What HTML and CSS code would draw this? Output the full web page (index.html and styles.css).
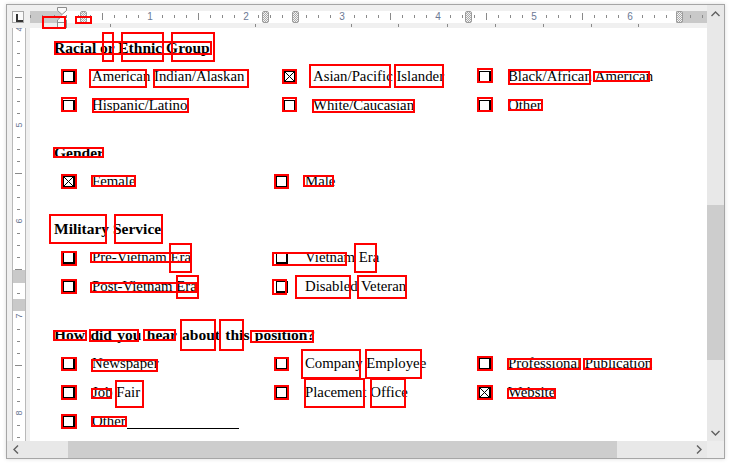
FILE: index.html
```html
<!DOCTYPE html>
<html>
<head>
<meta charset="utf-8">
<link rel="stylesheet" href="styles.css">
</head>
<body>
<div class="window">
  <div class="corner"><span class="tabsel"></span></div>
  <div class="hruler">
    <div class="band">
      <div class="nums"><span><b>1</b></span><span><b>2</b></span><span><b>3</b></span><span><b>4</b></span><span><b>5</b></span><span><b>6</b></span></div>
      <span class="mk" style="left:50px"></span>
      <span class="mk" style="left:232px"></span>
      <span class="mk" style="left:262px"></span>
      <span class="mk" style="left:435px"></span>
      <span class="mk" style="left:646px"></span>
    </div>
    <div class="tabs">
      <i style="left:80px"></i><i style="left:225px"></i><i style="left:321px"></i><i style="left:368px"></i><i style="left:417px"></i><i style="left:465px"></i><i style="left:513px"></i><i style="left:561px"></i><i style="left:608px"></i>
    </div>
    <svg class="indent" width="12" height="23" viewBox="0 0 12 23">
      <polygon points="1.5,1.5 10.5,1.5 10.5,4.5 6,8.5 1.5,4.5" fill="#fafafa" stroke="#8c8c8c"/>
      <polygon points="6,10 10.5,14 10.5,16.5 1.5,16.5 1.5,14" fill="#fafafa" stroke="#8c8c8c"/>
      <rect x="1.5" y="16.5" width="9" height="5" fill="#fafafa" stroke="#8c8c8c"/>
    </svg>
  </div>
  <div class="vscroll">
    <div class="btn"><svg width="9" height="6" viewBox="0 0 9 6"><polyline points="0.5,5 4.5,1 8.5,5" fill="none" stroke="#606060" stroke-width="1.4"/></svg></div>
    <div class="thumb"></div>
    <div class="btn end"><svg width="9" height="6" viewBox="0 0 9 6"><polyline points="0.5,1 4.5,5 8.5,1" fill="none" stroke="#606060" stroke-width="1.4"/></svg></div>
  </div>
  <div class="vruler">
    <div class="vband">
      <span class="vb" style="top:242px;height:13px"></span>
      <span class="vb" style="top:271px;height:12px"></span>
      <span class="vn" style="top:-4px">4</span>
      <span class="vn" style="top:92px">5</span>
      <span class="vn" style="top:188px">6</span>
      <span class="vn" style="top:283px">7</span>
      <span class="vn" style="top:380px">8</span>
    </div>
  </div>
  <div class="page">
    <section class="sec s1">
      <h2 class="hd">Racial or Ethnic Group</h2>
      <div class="row">
        <span class="opt"><i class="cb"></i>American Indian/Alaskan</span>
        <span class="opt"><i class="cb on"></i>Asian/Pacific Islander</span>
        <span class="opt"><i class="cb"></i>Black/African American</span>
      </div>
      <div class="row">
        <span class="opt"><i class="cb"></i>Hispanic/Latino</span>
        <span class="opt"><i class="cb"></i>White/Caucasian</span>
        <span class="opt"><i class="cb"></i>Other</span>
      </div>
    </section>
    <section class="sec">
      <h2 class="hd">Gender</h2>
      <div class="row">
        <span class="opt"><i class="cb on"></i>Female</span>
        <span class="opt"><i class="cb"></i>Male</span>
      </div>
    </section>
    <section class="sec">
      <h2 class="hd">Military Service</h2>
      <div class="row">
        <span class="opt"><i class="cb"></i>Pre-Vietnam Era</span>
        <span class="opt"><i class="cb"></i>Vietnam Era</span>
      </div>
      <div class="row">
        <span class="opt"><i class="cb"></i>Post-Vietnam Era</span>
        <span class="opt"><i class="cb"></i>Disabled Veteran</span>
      </div>
    </section>
    <section class="sec s4">
      <h2 class="hd wide">How did you hear about this position?</h2>
      <div class="row">
        <span class="opt"><i class="cb"></i>Newspaper</span>
        <span class="opt"><i class="cb"></i>Company Employee</span>
        <span class="opt"><i class="cb"></i>Professional Publication</span>
      </div>
      <div class="row">
        <span class="opt"><i class="cb"></i>Job Fair</span>
        <span class="opt"><i class="cb"></i>Placement Office</span>
        <span class="opt"><i class="cb on"></i>Website</span>
      </div>
      <div class="row">
        <span class="opt"><i class="cb"></i>Other<span class="blank"></span></span>
      </div>
    </section>
  </div>
  <div class="hscroll">
    <div class="btn"><svg width="6" height="9" viewBox="0 0 6 9"><polyline points="5,0.5 1,4.5 5,8.5" fill="none" stroke="#606060" stroke-width="1.4"/></svg></div>
    <div class="thumb"></div>
    <div class="btn end"><svg width="6" height="9" viewBox="0 0 6 9"><polyline points="1,0.5 5,4.5 1,8.5" fill="none" stroke="#606060" stroke-width="1.4"/></svg></div>
  </div>
  <div class="sizer"></div>
</div>

<div class="marks">
  <i class="rb" style="left:42px;top:16px;width:24px;height:13px"></i>
  <i class="rb" style="left:75px;top:16px;width:17px;height:8px"></i>
  <i class="rb" style="left:54px;top:41px;width:158px;height:14px"></i>
  <i class="rb" style="left:102px;top:32px;width:12px;height:30px"></i>
  <i class="rb" style="left:121px;top:32px;width:43px;height:30px"></i>
  <i class="rb" style="left:171px;top:32px;width:44px;height:30px"></i>

  <i class="rb" style="left:61px;top:69px;width:16px;height:15px"></i>
  <i class="rb" style="left:89px;top:69px;width:58px;height:19px"></i>
  <i class="rb" style="left:153px;top:69px;width:96px;height:19px"></i>
  <i class="rb" style="left:282px;top:69px;width:15px;height:15px"></i>
  <i class="rb" style="left:309px;top:64px;width:82px;height:24px"></i>
  <i class="rb" style="left:394px;top:64px;width:50px;height:24px"></i>
  <i class="rb" style="left:477px;top:68px;width:16px;height:15px"></i>
  <i class="rb" style="left:508px;top:69px;width:83px;height:16px"></i>
  <i class="rb" style="left:593px;top:71px;width:57px;height:11px"></i>

  <i class="rb" style="left:61px;top:97px;width:16px;height:15px"></i>
  <i class="rb" style="left:92px;top:98px;width:97px;height:15px"></i>
  <i class="rb" style="left:282px;top:97px;width:15px;height:15px"></i>
  <i class="rb" style="left:312px;top:99px;width:103px;height:14px"></i>
  <i class="rb" style="left:477px;top:97px;width:16px;height:15px"></i>
  <i class="rb" style="left:508px;top:99px;width:35px;height:12px"></i>

  <i class="rb" style="left:53px;top:147px;width:51px;height:11px"></i>
  <i class="rb" style="left:61px;top:174px;width:16px;height:15px"></i>
  <i class="rb" style="left:91px;top:175px;width:45px;height:12px"></i>
  <i class="rb" style="left:274px;top:174px;width:15px;height:15px"></i>
  <i class="rb" style="left:303px;top:175px;width:31px;height:12px"></i>

  <i class="rb" style="left:49px;top:214px;width:58px;height:30px"></i>
  <i class="rb" style="left:114px;top:214px;width:49px;height:30px"></i>
  <i class="rb" style="left:61px;top:251px;width:16px;height:15px"></i>
  <i class="rb" style="left:90px;top:252px;width:102px;height:11px"></i>
  <i class="rb" style="left:169px;top:243px;width:23px;height:30px"></i>
  <i class="rb" style="left:272px;top:252px;width:75px;height:14px"></i>
  <i class="rb" style="left:354px;top:243px;width:23px;height:30px"></i>
  <i class="rb" style="left:61px;top:279px;width:16px;height:15px"></i>
  <i class="rb" style="left:90px;top:282px;width:107px;height:11px"></i>
  <i class="rb" style="left:176px;top:275px;width:23px;height:24px"></i>
  <i class="rb" style="left:272px;top:279px;width:15px;height:16px"></i>
  <i class="rb" style="left:295px;top:275px;width:56px;height:24px"></i>
  <i class="rb" style="left:357px;top:275px;width:50px;height:24px"></i>

  <i class="rb" style="left:53px;top:330px;width:34px;height:11px"></i>
  <i class="rb" style="left:89px;top:329px;width:50px;height:13px"></i>
  <i class="rb" style="left:143px;top:329px;width:33px;height:12px"></i>
  <i class="rb" style="left:180px;top:319px;width:36px;height:32px"></i>
  <i class="rb" style="left:219px;top:319px;width:25px;height:32px"></i>
  <i class="rb" style="left:250px;top:330px;width:64px;height:13px"></i>
  <i class="rb" style="left:61px;top:357px;width:16px;height:14px"></i>
  <i class="rb" style="left:91px;top:359px;width:67px;height:13px"></i>
  <i class="rb" style="left:274px;top:357px;width:15px;height:14px"></i>
  <i class="rb" style="left:301px;top:349px;width:60px;height:30px"></i>
  <i class="rb" style="left:365px;top:349px;width:57px;height:30px"></i>
  <i class="rb" style="left:477px;top:356px;width:16px;height:15px"></i>
  <i class="rb" style="left:507px;top:358px;width:74px;height:12px"></i>
  <i class="rb" style="left:583px;top:358px;width:69px;height:12px"></i>
  <i class="rb" style="left:61px;top:385px;width:16px;height:15px"></i>
  <i class="rb" style="left:91px;top:388px;width:21px;height:11px"></i>
  <i class="rb" style="left:115px;top:380px;width:29px;height:28px"></i>
  <i class="rb" style="left:274px;top:385px;width:15px;height:15px"></i>
  <i class="rb" style="left:304px;top:378px;width:61px;height:30px"></i>
  <i class="rb" style="left:370px;top:378px;width:36px;height:30px"></i>
  <i class="rb" style="left:477px;top:385px;width:16px;height:15px"></i>
  <i class="rb" style="left:507px;top:388px;width:49px;height:11px"></i>
  <i class="rb" style="left:61px;top:414px;width:16px;height:15px"></i>
  <i class="rb" style="left:91px;top:416px;width:36px;height:11px"></i>
</div>
</body>
</html>
```

FILE: styles.css
```css
* { box-sizing: border-box; }
html, body { margin: 0; background: #fff; }
body {
  width: 731px;
  height: 467px;
  overflow: hidden;
  padding: 4px 0 0 6px;
  font-family: "Liberation Serif", "Times New Roman", serif;
  color: #000;
}

.window {
  width: 719px;
  height: 455px;
  border: 1px solid #a6a6a6;
  display: grid;
  grid-template-columns: 23px 677px 17px;
  grid-template-rows: 23px 413px 17px;
  background: #f0f0f0;
  box-shadow: 0 0 4px rgba(0, 0, 0, 0.14);
}

/* tab selector corner */
.corner { grid-column: 1; grid-row: 1; }
.tabsel {
  display: block;
  position: relative;
  margin: 6px 0 0 5px;
  width: 12px;
  height: 12px;
  border: 1px solid #a8a8a8;
  background: #fafafa;
}
.tabsel::before {
  content: "";
  position: absolute;
  left: 3px;
  top: 2px;
  width: 5px;
  height: 6px;
  border-left: 2px solid #333;
  border-bottom: 2px solid #333;
}

/* horizontal ruler */
.hruler { grid-column: 2; grid-row: 1; position: relative; }
.band {
  position: relative;
  margin-top: 6px;
  height: 12px;
  background:
    linear-gradient(90deg, #8a8a8a 0 1px, transparent 1px) 72px 2px / 96px 7px repeat-x,
    linear-gradient(90deg, #8a8a8a 0 1px, transparent 1px) 0 4px / 12px 3px repeat-x,
    linear-gradient(90deg, #c9c9c9 0 32px, #fff 32px 646px, #c9c9c9 646px);
}
.nums {
  position: absolute;
  left: 72px;
  top: 0;
  display: flex;
}
.nums span {
  width: 96px;
  text-align: center;
  font: 10px/12px "Liberation Sans", Arial, sans-serif;
  color: #6b7894;
}
.nums b { font-weight: normal; background: #fff; padding: 0 1px; }
.mk {
  position: absolute;
  top: 0;
  width: 7px;
  height: 12px;
  border: 1px solid #9c9c9c;
  border-radius: 2px;
  background: repeating-conic-gradient(#a9a9a9 0 25%, #f4f4f4 0 50%) 0 0 / 2px 2px;
}
.tabs { position: absolute; left: 0; top: 19px; width: 100%; height: 3px; }
.tabs i { position: absolute; top: 0; width: 1px; height: 3px; background: #8a8a8a; }
.indent { position: absolute; left: 26px; top: 1px; }

/* vertical scrollbar */
.vscroll {
  grid-column: 3;
  grid-row: 1 / span 2;
  background: #e8e8e8;
  display: flex;
  flex-direction: column;
}
.vscroll .btn { height: 17px; display: flex; align-items: center; justify-content: center; }
.vscroll .thumb { margin-top: 183px; height: 155px; background: #cdcdcd; }
.vscroll .end { margin-top: auto; }

/* horizontal scrollbar */
.hscroll {
  grid-column: 1 / span 2;
  grid-row: 3;
  background: #e8e8e8;
  display: flex;
}
.hscroll .btn { width: 17px; display: flex; align-items: center; justify-content: center; }
.hscroll .thumb { margin-left: 44px; width: 549px; background: #cdcdcd; }
.hscroll .end { margin-left: auto; }
.sizer { grid-column: 3; grid-row: 3; background: #ededed; }

/* vertical ruler */
.vruler { grid-column: 1; grid-row: 2; position: relative; overflow: hidden; }
.vband {
  position: absolute;
  left: 5px;
  top: 0;
  bottom: 0;
  width: 14px;
  background:
    linear-gradient(#8a8a8a 0 1px, transparent 1px) 2px 49px / 7px 96px repeat-y,
    linear-gradient(#8a8a8a 0 1px, transparent 1px) 4px 1px / 3px 12px repeat-y,
    #fff;
  border-left: 1px solid #b9b9b9;
  border-right: 1px solid #b9b9b9;
}
.vb { position: absolute; left: 0; right: 0; background: #c9c9c9; }
.vn {
  position: absolute;
  left: 1px;
  width: 10px;
  height: 10px;
  font: 9px/10px "Liberation Sans", Arial, sans-serif;
  color: #6b7894;
  text-align: center;
  background: #fff;
  transform: rotate(-90deg);
}

/* page */
.page {
  grid-column: 2;
  grid-row: 2;
  background: #fff;
  padding: 6px 0 0 24px;
  overflow: hidden;
}
.sec + .sec { margin-top: 19px; }
.sec.s4 { margin-top: 20px; }
.hd {
  margin: 0;
  font-size: 15.5px;
  font-weight: bold;
  line-height: 28px;
  height: 28px;
}
.hd.wide { word-spacing: 1.5px; }
.row {
  display: grid;
  grid-template-columns: 213px 203px auto;
  height: 29px;
  padding-left: 9px;
  font-size: 14.8px;
  line-height: 29px;
}
.s1 .row { grid-template-columns: 221px 195px auto; }
.opt { display: flex; align-items: center; white-space: nowrap; }
.cb {
  flex: none;
  width: 12px;
  height: 12px;
  margin-right: 17px;
  border: 1px solid #000;
  border-right-width: 2px;
  border-bottom-width: 2px;
  background: #fff;
}
.cb.on {
  background:
    linear-gradient(45deg, transparent calc(50% - 0.7px), #000 50%, transparent calc(50% + 0.7px)),
    linear-gradient(-45deg, transparent calc(50% - 0.7px), #000 50%, transparent calc(50% + 0.7px)),
    #fff;
}
.blank {
  display: inline-block;
  width: 112px;
  height: 1px;
  margin-top: 13px;
  margin-left: 1px;
  border-bottom: 1px solid #000;
}

/* annotation boxes */
.marks { position: absolute; left: 0; top: 0; width: 0; height: 0; }
.rb {
  position: absolute;
  border: 2px solid #ff0000;
}
```
